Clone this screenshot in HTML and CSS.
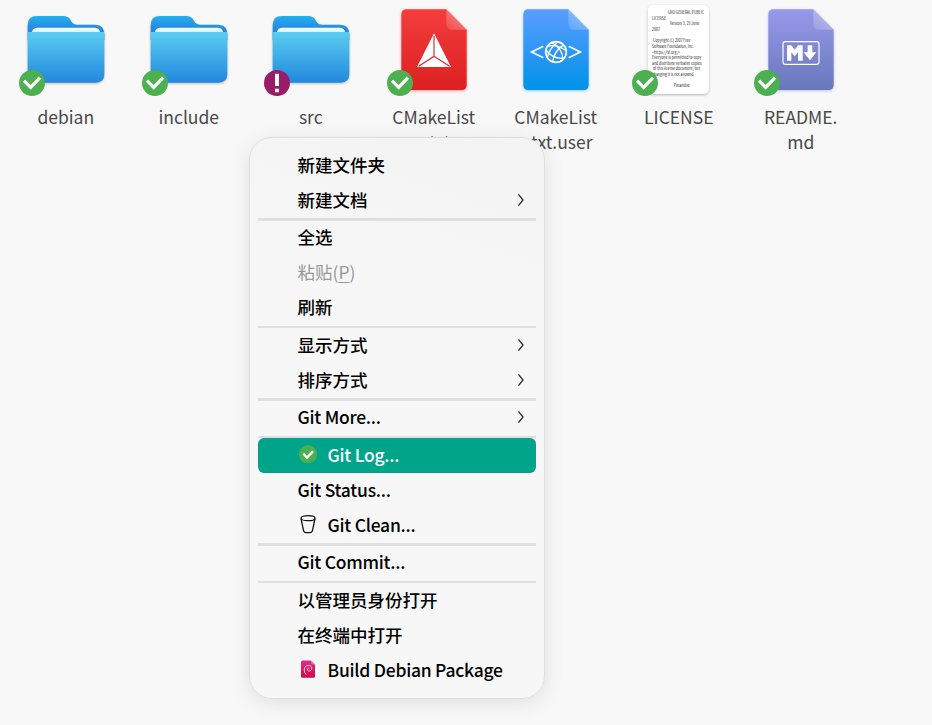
FILE: index.html
```html
<!DOCTYPE html>
<html lang="zh-CN">
<head>
<meta charset="utf-8">
<title>文件管理器</title>
<link rel="stylesheet" href="styles.css">
</head>
<body>
<svg class="defs" width="0" height="0" aria-hidden="true">
  <defs>
    <linearGradient id="back" x1="0" y1="0" x2="0" y2="1"><stop offset="0" stop-color="#22b1ee"/><stop offset=".62" stop-color="#2883dd"/><stop offset="1" stop-color="#2883dd"/></linearGradient>
    <linearGradient id="front" x1="0" y1="0" x2="0" y2="1"><stop offset="0" stop-color="#5bcdf0"/><stop offset="1" stop-color="#2288de"/></linearGradient>
    <linearGradient id="paper" x1="0" y1="0" x2="0" y2="1"><stop offset="0" stop-color="#fff"/><stop offset="1" stop-color="#c6f2fb"/></linearGradient>
    <linearGradient id="red" x1="0" y1="0" x2="0" y2="1"><stop offset="0" stop-color="#f43d3d"/><stop offset="1" stop-color="#dc2020"/></linearGradient>
    <linearGradient id="blue" x1="0" y1="0" x2="0" y2="1"><stop offset="0" stop-color="#5b9dff"/><stop offset="1" stop-color="#0092e8"/></linearGradient>
    <linearGradient id="violet" x1="0" y1="0" x2="0" y2="1"><stop offset="0" stop-color="#9899ea"/><stop offset="1" stop-color="#6877bb"/></linearGradient>
    <linearGradient id="pink" x1="0" y1="0" x2="0" y2="1"><stop offset="0" stop-color="#e02d86"/><stop offset="1" stop-color="#cc0a4d"/></linearGradient>
    <linearGradient id="fold" x1="0" y1="1" x2="1" y2="0"><stop offset="0" stop-color="#fff" stop-opacity=".12"/><stop offset="1" stop-color="#fff" stop-opacity=".4"/></linearGradient>
    <symbol id="folder" viewBox="15 0 366 300">
      <path fill="url(#back)" d="M83 110V76Q83 48 111 48H190Q204 48 211 59L217 68Q222 74 232 74H286Q313 75 313 103V120H83Z"/>
      <path fill="url(#paper)" d="M95 98Q98 83 112 83H284Q298 83 301 98Z"/>
      <path fill="url(#front)" d="M83 96H313V222Q313 248 287 248H109Q83 248 83 222Z"/>
    </symbol>
    <symbol id="page" viewBox="15 0 366 300">
      <path d="M116 28H235L296 89V254Q296 270 280 270H116Q100 270 100 254V44Q100 28 116 28Z"/>
      <path fill="url(#fold)" d="M235 28L296 89H253Q235 89 235 71Z"/>
    </symbol>
    <symbol id="ok" viewBox="15 0 366 300">
      <circle cx="96" cy="249" r="39" fill="#4caf50"/>
      <path d="M72 242L92 262L120 233" fill="none" stroke="#fff" stroke-width="10"/>
    </symbol>
    <symbol id="arrow" viewBox="0 0 8 14"><path d="M1.5 1.3L6 7L1.5 12.7" fill="none" stroke="#303030" stroke-width="1.35"/></symbol>
  </defs>
</svg>

<main class="files">
  <figure class="file">
    <svg class="icon" viewBox="15 0 366 300"><use class="folder-shadow" href="#folder" x="15" width="366" height="300"/><use href="#ok" x="15" width="366" height="300"/></svg>
    <figcaption>debian</figcaption>
  </figure>
  <figure class="file">
    <svg class="icon" viewBox="15 0 366 300"><use class="folder-shadow" href="#folder" x="15" width="366" height="300"/><use href="#ok" x="15" width="366" height="300"/></svg>
    <figcaption>include</figcaption>
  </figure>
  <figure class="file">
    <svg class="icon" viewBox="15 0 366 300"><use class="folder-shadow" href="#folder" x="15" width="366" height="300"/>
      <circle cx="96" cy="249" r="39" fill="#981d66"/><path fill="#fff" d="M90 221H102V258H90ZM90 266H102V277H90Z"/></svg>
    <figcaption>src</figcaption>
  </figure>
  <figure class="file">
    <svg class="icon" viewBox="15 0 366 300"><use class="page-red" href="#page" x="15" width="366" height="300"/>
      <path fill="#fff" d="M198 100L249 201H147Z"/>
      <path d="M198 108V169L152 199M198 169L245 199" fill="none" stroke="#df2929" stroke-width="3.6"/>
      <use href="#ok" x="15" width="366" height="300"/></svg>
    <figcaption>CMakeList<br>s.txt</figcaption>
  </figure>
  <figure class="file">
    <svg class="icon" viewBox="15 0 366 300"><use class="page-blue" href="#page" x="15" width="366" height="300"/>
      <g fill="none" stroke="#fff" stroke-width="5">
        <path d="M160 139L125 156L160 173M236 139L271 156L236 173"/>
        <circle cx="198" cy="156" r="31"/>
        <path stroke-width="4" d="M185 128Q218 145 219 179M204 126Q177 145 172 173M168 150Q188 178 222 174M171 140Q200 130 225 151M219 136Q194 151 188 185"/>
      </g></svg>
    <figcaption>CMakeList<br>s.txt.user</figcaption>
  </figure>
  <figure class="file">
    <svg class="icon" viewBox="15 0 366 300">
      <rect class="sheet" x="104" y="15" width="184" height="267" rx="16" fill="#fff"/>
      <g class="tiny">
        <text x="164" y="42" textLength="109" lengthAdjust="spacingAndGlyphs">GNU GENERAL PUBLIC</text>
        <text x="117" y="59" textLength="42" lengthAdjust="spacingAndGlyphs">LICENSE</text>
        <text x="170" y="76" textLength="89" lengthAdjust="spacingAndGlyphs">Version 3, 29 June</text>
        <text x="117" y="93" textLength="24" lengthAdjust="spacingAndGlyphs">2007</text>
        <text x="120" y="127" textLength="112" lengthAdjust="spacingAndGlyphs">Copyright (C) 2007 Free</text>
        <text x="117" y="144" textLength="125" lengthAdjust="spacingAndGlyphs">Software Foundation, Inc.</text>
        <text x="117" y="161" textLength="84" lengthAdjust="spacingAndGlyphs">&lt;https://fsf.org/&gt;</text>
        <text x="117" y="178" textLength="148" lengthAdjust="spacingAndGlyphs">Everyone is permitted to copy</text>
        <text x="117" y="195" textLength="149" lengthAdjust="spacingAndGlyphs">and distribute verbatim copies</text>
        <text x="120" y="211" textLength="141" lengthAdjust="spacingAndGlyphs">of this license document, but</text>
        <text x="117" y="228" textLength="127" lengthAdjust="spacingAndGlyphs">changing it is not allowed.</text>
        <text x="182" y="262" textLength="48" lengthAdjust="spacingAndGlyphs">Preamble</text>
      </g>
      <use href="#ok" x="15" width="366" height="300"/></svg>
    <figcaption>LICENSE</figcaption>
  </figure>
  <figure class="file">
    <svg class="icon" viewBox="15 0 366 300"><use class="page-violet" href="#page" x="15" width="366" height="300"/>
      <rect x="144" y="125" width="108" height="68" rx="7" fill="none" stroke="#fff" stroke-width="3.5"/>
      <path fill="#fff" d="M156 182V136H169L179 149L189 136H203V182H189V157L179 169L169 157V182ZM218 136H232V157H244L225 181L206 157H218Z"/>
      <use href="#ok" x="15" width="366" height="300"/></svg>
    <figcaption>README.<br>md</figcaption>
  </figure>
</main>

<nav class="menu">
  <div class="row">新建文件夹</div>
  <div class="row">新建文档<svg class="arrow"><use href="#arrow"/></svg></div>
  <div class="sep thick"></div>
  <div class="row raised">全选</div>
  <div class="row raised disabled"><span>粘贴(<span class="key">P</span>)</span></div>
  <div class="row raised">刷新</div>
  <div class="sep"></div>
  <div class="row">显示方式<svg class="arrow"><use href="#arrow"/></svg></div>
  <div class="row">排序方式<svg class="arrow"><use href="#arrow"/></svg></div>
  <div class="sep thick"></div>
  <div class="row raised latin">Git More...<svg class="arrow"><use href="#arrow"/></svg></div>
  <div class="sep"></div>
  <div class="row latin active"><svg class="mini" viewBox="0 0 20 20"><circle cx="10" cy="9.2" r="9.1" fill="#4caf50"/><path d="M5.2 8.8L9 12.6L15 6.4" fill="none" stroke="#fff" stroke-width="2.3"/></svg>Git Log...</div>
  <div class="row latin">Git Status...</div>
  <div class="row latin"><svg class="mini" viewBox="0 0 20 20"><g fill="none" stroke="#111" stroke-width="1.3"><ellipse cx="10" cy="3.2" rx="7" ry="2.5"/><path d="M3 3.4L5.4 15Q5.8 17.6 8 17.6H12Q14.2 17.6 14.6 15L17 3.4"/></g></svg>Git Clean...</div>
  <div class="sep thick"></div>
  <div class="row raised latin">Git Commit...</div>
  <div class="sep"></div>
  <div class="row">以管理员身份打开</div>
  <div class="row">在终端中打开</div>
  <div class="row latin"><svg class="mini" viewBox="0 0 20 20"><path fill="url(#pink)" d="M4.6.6H13L17 4.6V16.2Q17 17.8 15.4 17.8H4.6Q3 17.8 3 16.2V2.2Q3 .6 4.6 .6Z"/><path fill="#fff" fill-opacity=".3" d="M13 .6L17 4.6H14Q13 4.6 13 3.6Z"/><path d="M8.2 14.6C5.6 12 5.6 7.4 8.6 5.8C11.6 4.4 14.4 6.6 13.6 9.2C13 11.4 9.8 11.6 9.4 9.8C9.2 8.6 10.2 7.8 11.2 8.2" fill="none" stroke="#ffd3e5" stroke-width="1"/></svg>Build Debian Package</div>
</nav>
</body>
</html>
```
FILE: styles.css
```css
* { box-sizing: border-box; }

body {
  margin: 0;
  height: 725px;
  overflow: hidden;
  background: #f8f8f8;
  font-family: "Noto Sans CJK SC", "Noto Sans", sans-serif;
}

.defs { position: absolute; }

.files {
  display: grid;
  grid-template-columns: 123px 122px 123px 122px 123px 122px 123px;
  padding-left: 5px;
}

.file { margin: 0; width: 122px; }

.icon {
  display: block;
  width: 122px;
  height: 100px;
  overflow: visible;
}

.file figcaption {
  margin-top: 4px;
  padding-right: .5px;
  font-size: 17.5px;
  line-height: 25px;
  text-align: center;
  color: #484848;
}

.folder-shadow { filter: drop-shadow(0 3px 3px rgba(0, 0, 0, .25)); }
.page-red { fill: url(#red); filter: drop-shadow(0 3px 5px rgba(220, 32, 32, .4)); }
.page-blue { fill: url(#blue); filter: drop-shadow(0 3px 5px rgba(0, 146, 232, .4)); }
.page-violet { fill: url(#violet); filter: drop-shadow(0 3px 5px rgba(104, 119, 187, .4)); }
.sheet { filter: drop-shadow(0 3px 3px rgba(0, 0, 0, .28)); }
.tiny { font-size: 12.5px; fill: #222; }

.menu {
  position: absolute;
  left: 249px;
  top: 137px;
  width: 296px;
  height: 562px;
  padding: 10px 8px;
  border: 1px solid #dedede;
  border-radius: 23px;
  background: linear-gradient(200deg, #f3f3f3, #f7f7f7 35%);
  box-shadow: 0 4px 20px rgba(0, 0, 0, .1);
}

.row {
  display: flex;
  align-items: center;
  height: 35px;
  padding: 0 11px 2px 39.5px;
  border-radius: 6px;
  font-size: 17.5px;
  font-weight: 500;
  line-height: 33px;
  color: #000;
  white-space: pre;
}

.raised { padding-bottom: 4px; line-height: 31px; }
.latin { letter-spacing: -.25px; }
.sep { height: 2px; background: #dfdfdf; }
.thick { height: 3px; }
.disabled { color: #999; font-weight: 400; }
.key { text-decoration: underline 1px; text-underline-offset: 3px; }
.active { background: #00a489; color: #fff; }
.arrow { width: 8px; height: 14px; margin-left: auto; margin-top: 1px; }
.mini { width: 20px; height: 20px; margin-right: 10px; margin-top: 1px; }
```
